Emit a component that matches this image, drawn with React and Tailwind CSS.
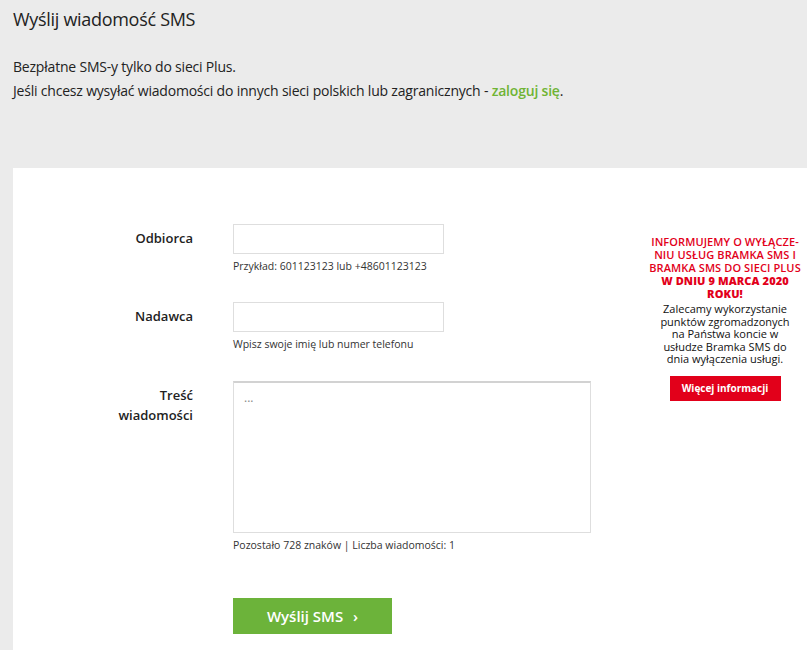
import React from 'react';

const FONT = { fontFamily: '"Open Sans", "Liberation Sans", sans-serif' };

function Field({ label, hint, children, className = '' }) {
  return (
    <div className={`flex ${className}`}>
      <div className="w-[180px] shrink-0 text-right text-[13px] font-semibold leading-[20px] text-[#222] pt-[4px]">
        {label}
      </div>
      <div className="ml-[40px]">
        {children}
        <p className="mt-[5px] text-[10.5px] leading-[14px] text-[#333]">{hint}</p>
      </div>
    </div>
  );
}

export default function App() {
  return (
    <div className="min-h-[650px] bg-[#ebebeb] text-[#222]" style={FONT}>
      <div className="px-[13px] pt-[5px]">
        <h1 className="text-[18px] leading-[28px] font-normal tracking-[-0.3px] text-[#222]">Wyślij wiadomość SMS</h1>
        <div className="mt-[22px] text-[14px] leading-[24px] tracking-[-0.2px] text-[#222]">
          <p>Bezpłatne SMS-y tylko do sieci Plus.</p>
          <p>
            Jeśli chcesz wysyłać wiadomości do innych sieci polskich lub zagranicznych -{' '}
            <a href="#" className="font-semibold text-[#6fb434]">zaloguj się</a>.
          </p>
        </div>
      </div>

      <div className="mt-[65px] ml-[13px] bg-white flex min-h-[482px]">
        <form className="flex-1 pt-[56px]" onSubmit={e => e.preventDefault()}>
          <Field label="Odbiorca" hint="Przykład: 601123123 lub +48601123123">
            <input className="block w-[211px] h-[30px] border border-[#dedede] outline-none px-2 text-[13px]" />
          </Field>

          <Field label="Nadawca" hint="Wpisz swoje imię lub numer telefonu" className="mt-[29px]">
            <input className="block w-[211px] h-[30px] border border-[#dedede] outline-none px-2 text-[13px]" />
          </Field>

          <Field
            label={<>Treść<br />wiadomości</>}
            hint="Pozostało 728 znaków | Liczba wiadomości: 1"
            className="mt-[30px]"
          >
            <textarea
              placeholder="..."
              className="block w-[358px] h-[152px] border border-[#dedede] border-t-[#d2d2d2] border-t-2 outline-none resize-none px-[10px] py-[6px] text-[12px] placeholder:text-[#888]"
            />
          </Field>

          <div className="ml-[220px] mt-[46px]">
            <button className="w-[159px] h-[36px] bg-[#6cb33a] text-white text-[15px] font-semibold">
              Wyślij SMS <span className="ml-[6px]">›</span>
            </button>
          </div>
        </form>

        <aside className="w-[152px] mr-[6px] pt-[67px] text-center shrink-0">
          <p className="text-[11px] leading-[13px] font-semibold uppercase text-[#e2001a] tracking-[0.1px] -mx-[2px]">
            Informujemy o wyłącze-<br />niu usług Bramka SMS i<br />Bramka SMS do sieci Plus<br />
            <span className="font-extrabold">w dniu 9 marca 2020<br />roku!</span>
          </p>
          <p className="mt-[3px] text-[11px] leading-[12.5px] text-[#111]">
            Zalecamy wykorzystanie<br />punktów zgromadzonych<br />na Państwa koncie w<br />usłudze Bramka SMS do<br />dnia wyłączenia usługi.
          </p>
          <button className="mt-[10px] w-[111px] h-[25px] bg-[#e2001a] text-white text-[10px] font-bold">
            Więcej informacji
          </button>
        </aside>
      </div>
    </div>
  );
}
